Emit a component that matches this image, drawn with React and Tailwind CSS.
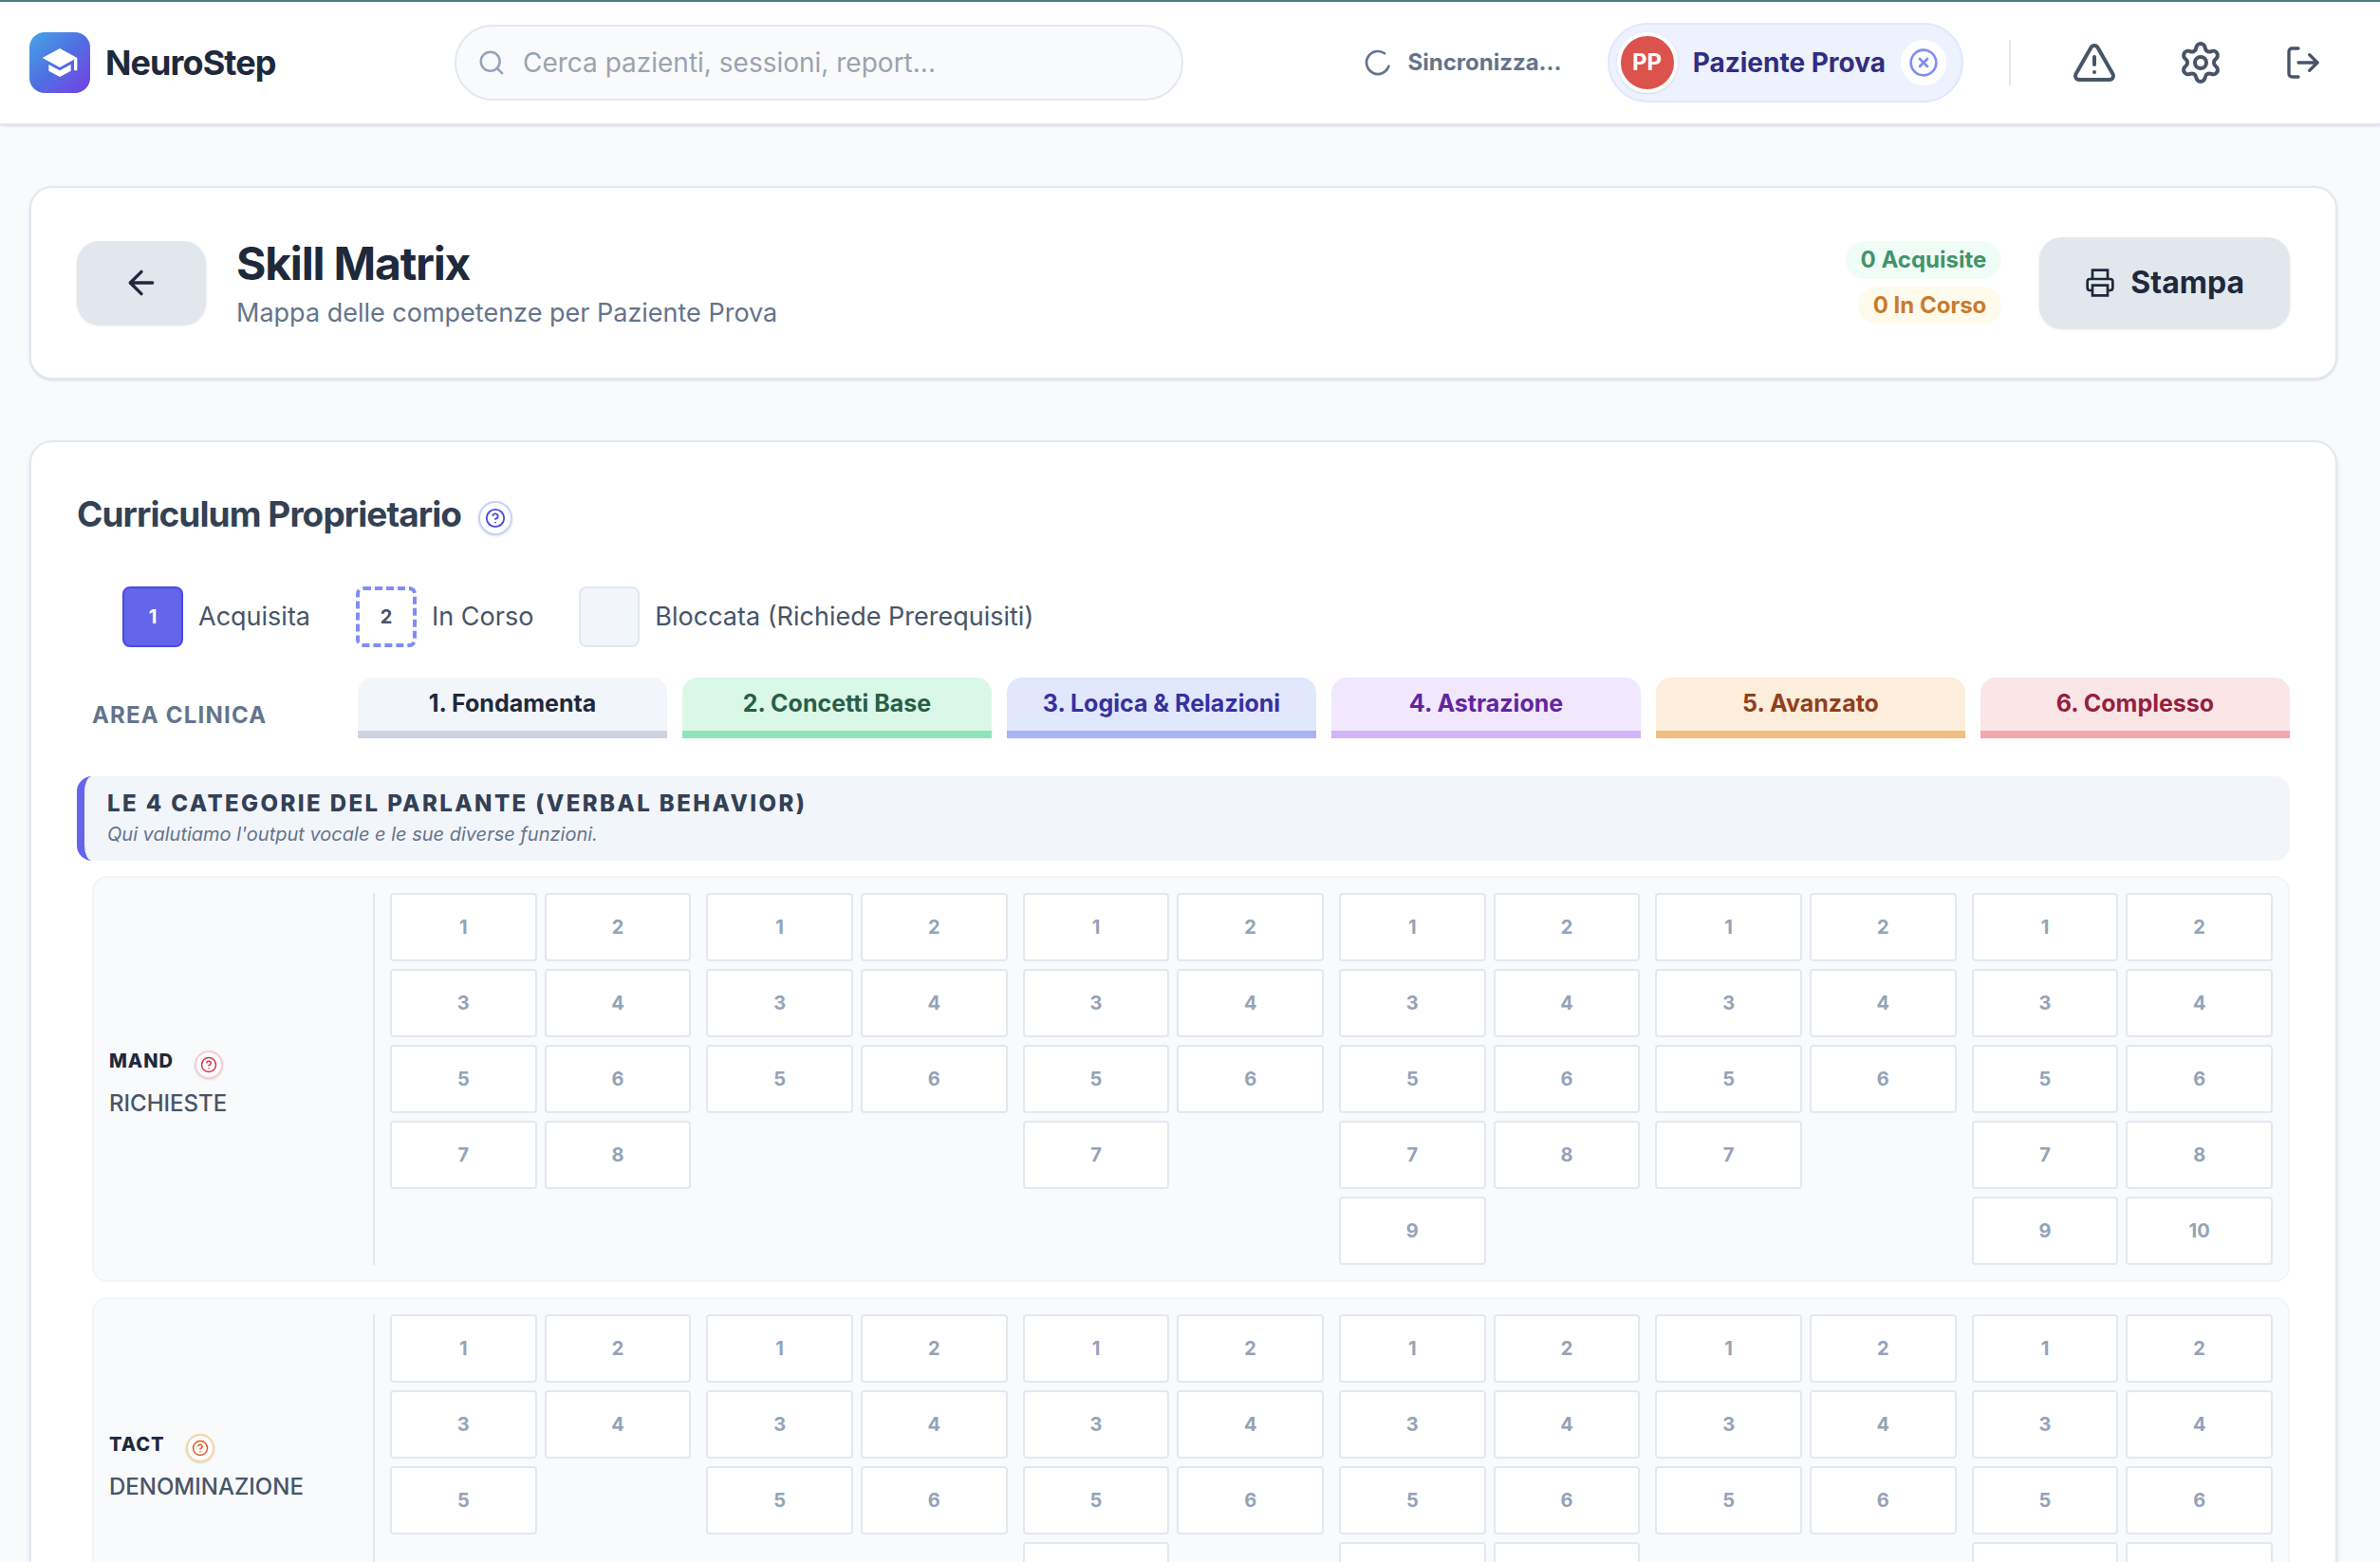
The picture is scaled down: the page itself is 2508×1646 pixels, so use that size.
import { Search, CircleX, TriangleAlert, Settings, LogOut, ArrowLeft, LoaderCircle, CircleHelp } from 'lucide-react';

const levels = [
  { name: '1. Fondamenta', style: 'bg-[#f2f5fa] border-[#cdd4e0] text-[#1f293a]' },
  { name: '2. Concetti Base', style: 'bg-[#daf8e7] border-[#8ee5bb] text-[#295e48]' },
  { name: '3. Logica & Relazioni', style: 'bg-[#e1e7fd] border-[#a8b3f8] text-[#3730a0]' },
  { name: '4. Astrazione', style: 'bg-[#f1e8fd] border-[#d2b5fb] text-[#6424a2]' },
  { name: '5. Avanzato', style: 'bg-[#fceedb] border-[#f2bd80] text-[#923f1d]' },
  { name: '6. Complesso', style: 'bg-[#fae5e7] border-[#f1a7b0] text-[#951f3d]' },
];

const areas = [
  {
    code: 'MAND',
    label: 'RICHIESTE',
    help: 'border-[#f8ccd1] text-[#d4314f]',
    skills: [8, 6, 7, 9, 7, 10],
  },
  {
    code: 'TACT',
    label: 'DENOMINAZIONE',
    help: 'border-[#f8d4a6] text-[#dc5d27]',
    skills: [5, 6, 7, 8, 6, 8],
  },
];

function PrinterIcon() {
  return (
    <svg viewBox="0 0 24 24" className="size-8" fill="none" stroke="currentColor" strokeWidth="2" aria-hidden="true">
      <path d="M6 9V2h12v7" />
      <path d="M6 18H4a2 2 0 0 1-2-2v-5a2 2 0 0 1 2-2h16a2 2 0 0 1 2 2v5a2 2 0 0 1-2 2h-2" />
      <path d="M6 14h12v8H6z" />
    </svg>
  );
}

function Header() {
  return (
    <header className="flex h-[132px] items-center border-t-2 border-b-2 border-t-[#4a7c82] border-b-[#e2e8f0] bg-white pl-[31px] pr-[45px] shadow-sm">
      <a href="#" className="flex items-center gap-4">
        <span className="flex size-16 items-center justify-center rounded-2xl bg-linear-to-br from-[#46a4e6] via-[#4f6ee2] to-[#7439e4] text-white">
          <svg viewBox="0 0 24 24" className="size-10" fill="currentColor" aria-hidden="true">
            <path d="M5 13.18v4L12 21l7-3.82v-4L12 17l-7-3.82zM12 3L1 9l11 6 9-4.91V17h2V9L12 3z" />
          </svg>
        </span>
        <span className="text-4xl font-bold tracking-tight text-[#1e293b]">NeuroStep</span>
      </a>

      <div className="flex flex-1 justify-center">
        <label className="flex h-20 w-full max-w-3xl items-center gap-[18px] rounded-full border-2 border-[#e2e8f0] bg-[#f8fafc] px-[22px]">
          <Search className="size-8 text-[#94a3b8]" />
          <input
            type="search"
            aria-label="Cerca"
            placeholder="Cerca pazienti, sessioni, report..."
            className="w-full bg-transparent text-[28px] outline-none placeholder:text-[#9ca3af]"
          />
        </label>
      </div>

      <div className="flex items-center gap-12">
        <div className="flex items-center gap-4 text-2xl font-bold text-[#64748b]">
          <LoaderCircle className="size-8 rotate-[18deg]" />
          <span>Sincronizza...</span>
        </div>

        <div className="flex items-center gap-4 rounded-full border-2 border-[#e0e7ff] bg-[#eef2ff] py-2 pr-4 pl-2">
          <span className="flex size-16 items-center justify-center rounded-full border-4 border-white bg-[#dc524c] text-2xl font-bold text-white shadow-sm">
            PP
          </span>
          <span className="text-[28px] font-bold text-[#312e81]">Paziente Prova</span>
          <button type="button" aria-label="Chiudi paziente" className="flex size-12 items-center justify-center rounded-full bg-white text-[#818cf8]">
            <CircleX className="size-8" />
          </button>
        </div>

        <div className="h-12 w-0.5 bg-[#e2e8f0]" />

        <div className="flex items-center gap-8 text-[#475569]">
          <button type="button" aria-label="Segnala" className="p-4">
            <TriangleAlert className="size-12" />
          </button>
          <button type="button" aria-label="Impostazioni" className="p-4">
            <Settings className="size-12" />
          </button>
          <button type="button" aria-label="Esci" className="p-4">
            <LogOut className="size-10" />
          </button>
        </div>
      </div>
    </header>
  );
}

function TitleCard() {
  return (
    <section className="flex items-center justify-between rounded-3xl border-2 border-[#e2e8f0] bg-white p-12 shadow-sm">
      <div className="flex items-center gap-8">
        <button type="button" aria-label="Indietro" className="rounded-3xl bg-[#e2e7ee] px-12 py-6 text-[#1e293b] shadow-sm">
          <ArrowLeft className="size-10" />
        </button>
        <div>
          <h1 className="text-5xl leading-[64px] font-bold tracking-tight text-[#1e293b]">Skill Matrix</h1>
          <p className="text-[27px] leading-10 text-[#64748b]">Mappa delle competenze per Paziente Prova</p>
        </div>
      </div>
      <div className="flex items-center gap-10">
        <div className="flex flex-col items-end gap-2 text-2xl leading-10 font-bold">
          <span className="rounded-full bg-[#f0fdf6] px-4 text-[#43936b]">0 Acquisite</span>
          <span className="rounded-full bg-[#fffbec] px-4 text-[#c97b2f]">0 In Corso</span>
        </div>
        <button type="button" className="flex h-24 items-center gap-4 rounded-3xl bg-[#e2e7ee] px-12 text-[32px] font-bold text-[#1e293b] shadow-sm">
          <PrinterIcon />
          Stampa
        </button>
      </div>
    </section>
  );
}

function Legend() {
  return (
    <ul className="flex items-center gap-12 px-12 text-[27px] text-[#475569]">
      <li className="flex items-center gap-4">
        <span className="flex size-16 items-center justify-center rounded-lg border-2 border-[#4f46e5] bg-[#6366e9] text-xl font-bold text-white">1</span>
        Acquisita
      </li>
      <li className="flex items-center gap-4">
        <span className="flex size-16 items-center justify-center rounded-lg border-4 border-dashed border-[#818cf8] text-xl font-bold">2</span>
        In Corso
      </li>
      <li className="flex items-center gap-4">
        <span className="size-16 rounded-lg border-2 border-[#e2e8f0] bg-[#f2f5fa]" />
        Bloccata (Richiede Prerequisiti)
      </li>
    </ul>
  );
}

function SkillRow({ area }) {
  return (
    <div className="ml-4 grid grid-cols-[280px_repeat(6,minmax(0,1fr))] gap-4 rounded-2xl border-2 border-[#f1f5f9] bg-[#f8fafc] p-4">
      <div className="flex flex-col justify-center gap-1.5 border-r-2 border-[#e2e8f0] pt-2">
        <div className="flex items-center gap-[22px]">
          <h3 className="text-xl font-extrabold tracking-wider text-[#1e293b]">{area.code}</h3>
          <button type="button" aria-label={`Aiuto ${area.code}`} className={`mt-2 flex size-[30px] items-center justify-center rounded-full border-2 bg-white shadow-sm ${area.help}`}>
            <CircleHelp className="size-[18px]" />
          </button>
        </div>
        <p className="text-2xl leading-10 font-medium text-[#475569]">{area.label}</p>
      </div>
      {area.skills.map((count, level) => (
        <div key={level} className="grid grid-cols-2 content-start gap-2">
          {Array.from({ length: count }, (_, i) => (
            <button key={i} type="button" className="h-[72px] rounded-sm border-2 border-[#e2e8f0] bg-white text-xl leading-5 font-bold text-[#94a3b8]">
              {i + 1}
            </button>
          ))}
        </div>
      ))}
    </div>
  );
}

export default function App() {
  return (
    <div className="min-h-screen bg-[#f8fafc] font-['Inter',sans-serif]">
      <Header />
      <main className="flex flex-col gap-16 pt-16 pr-[45px] pb-16 pl-[31px]">
        <TitleCard />

        <section className="rounded-3xl border-2 border-[#e2e8f0] bg-white p-12 shadow-md">
          <div className="mb-12 flex items-center gap-[18px]">
            <h2 className="text-[37px] leading-[56px] font-bold tracking-tight text-[#334155]">Curriculum Proprietario</h2>
            <button type="button" aria-label="Aiuto" className="mt-2 flex size-9 items-center justify-center rounded-full border-2 border-[#c7d2fe] bg-white text-[#4f46e5] shadow-sm">
              <CircleHelp className="size-[22px]" />
            </button>
          </div>

          <Legend />

          <div className="mt-8 grid grid-cols-[280px_repeat(6,minmax(0,1fr))] gap-4">
            <div className="self-end px-4 text-2xl leading-[48px] font-bold tracking-wider text-[#64748b]">AREA CLINICA</div>
            {levels.map((level) => (
              <div key={level.name} className={`flex h-16 items-center justify-center rounded-t-2xl border-b-8 text-[25px] font-bold ${level.style}`}>
                {level.name}
              </div>
            ))}
          </div>

          <div className="mt-10 mb-4 rounded-2xl border-l-8 border-[#6366e9] bg-[#f2f5fa] px-6 pt-[13px] pb-3">
            <h3 className="text-2xl leading-8 font-extrabold tracking-widest text-[#334155]">LE 4 CATEGORIE DEL PARLANTE (VERBAL BEHAVIOR)</h3>
            <p className="text-xl leading-8 text-[#64748b] italic">Qui valutiamo l'output vocale e le sue diverse funzioni.</p>
          </div>

          <div className="flex flex-col gap-4">
            {areas.map((area) => (
              <SkillRow key={area.code} area={area} />
            ))}
          </div>
        </section>
      </main>
    </div>
  );
}
